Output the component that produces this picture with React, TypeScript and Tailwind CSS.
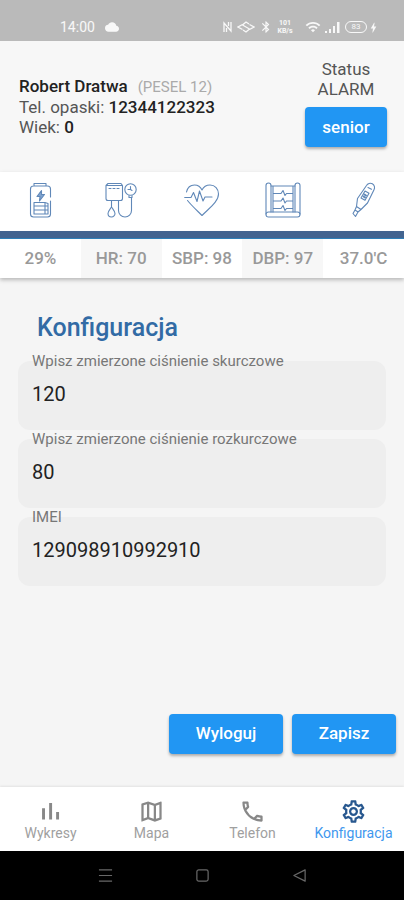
import React, { useState } from "react";
import {
  MdBluetooth,
  MdBolt,
  MdCloud,
  MdOutlineMap,
  MdOutlinePhone,
  MdOutlineSettings,
  MdWifi,
} from "react-icons/md";

const line = {
  width: 36,
  height: 36,
  viewBox: "0 0 36 36",
  fill: "none",
  stroke: "currentColor",
  strokeWidth: 1.1,
  strokeLinecap: "round" as const,
  strokeLinejoin: "round" as const,
  "aria-hidden": true,
};

function BatteryIcon() {
  return (
    <svg {...line}>
      <path d="M12 4V1.500h12V4M28.500 15V7a3 3 0 0 0-3-3h-14a3 3 0 0 0-3 3v25a3 3 0 0 0 3 3h14a3 3 0 0 0 3-3V19" />
      <path d="M19.500 8.500L15 14.500h3l-.5 4.500 5-6.500h-3z" fill="#7fa3cf" />
      <path d="M12 20.500h11v11.500H12zM12 24h14M12 28h14M23 20.500l3 1V32h-3" />
    </svg>
  );
}

function PressureIcon() {
  return (
    <svg {...line}>
      <path d="M3 3.500h16.500v13a2 2 0 0 1-2 2H5a2 2 0 0 1-2-2zM3 3.500l2-2h13l1.500 2M6 6.500h2M10 6.500h2M14 6.500h2" />
      <path d="M8.500 18.500V25M8.500 25c-2 3-3.500 4.500-3.500 6.500a3.500 3.500 0 0 0 7 0c0-2-1.500-3.500-3.500-6.500z" />
      <circle cx="27.500" cy="7.500" r="5.700" />
      <path d="M27.500 4.500v3H25M27.500 7.500l1.500 1M26 13.500v2h3v-2M28.500 15.500v13a6.500 6.500 0 0 1-13 0v-10" />
    </svg>
  );
}

function HeartIcon() {
  return (
    <svg {...line}>
      <path d="M2.500 10C3.500 5.500 6.500 3 10.500 3c3.500 0 6 1.800 7.500 5 1.500-3.200 4.500-5 8-5 5 0 8.500 4 8.500 9 0 7.500-8.500 13.500-16.500 21.500C13 28.500 7.500 23.500 3.500 18.500" />
      <path d="M.7 15.500H7l2.500-5 3.500 9L15.500 9l3.500 10 2-4h7" />
    </svg>
  );
}

function ScrollIcon() {
  return (
    <svg {...line}>
      <path d="M1 32V3.500a2.500 2.500 0 0 1 5 0V30M35 32V3.500a2.500 2.500 0 0 0-5 0V30" />
      <path d="M1 32.500A2.500 2.500 0 0 1 3.500 30h29a2.500 2.500 0 0 1 0 5h-29A2.500 2.500 0 0 1 1 32.500z" />
      <path d="M6 4h24M8 4v26M28 4v26M8 11.500h8l2-3 2 5 1.500-2H28M8 19h8l2-3 2 5 1.500-2H28M8 26.500h8l2-3 2 5 1.500-2H28" />
    </svg>
  );
}

function ThermometerIcon() {
  return (
    <svg {...line}>
      <path d="M20.500 3.500a4.200 4.200 0 0 1 7.500 4.200L21.500 21 15 27.500l-4.500-3 1-8zM10.500 24.500L9 28l3 2 3-2.500M9 28l-2 3.500 2.500 3 2.500-4.500M22 5.500l3.500 1.700" />
      <path d="M19 9l4 2.300-4 7-4-2.300z" />
      <path d="M18.500 12.500l1.500 1M17.500 14.500l1.500 1" strokeWidth="2" />
    </svg>
  );
}

const metrics = [
  { Icon: BatteryIcon, value: "29%" },
  { Icon: PressureIcon, value: "HR: 70" },
  { Icon: HeartIcon, value: "SBP: 98" },
  { Icon: ScrollIcon, value: "DBP: 97" },
  { Icon: ThermometerIcon, value: "37.0'C" },
];

function ChartIcon({ size = 27, className }: { size?: number; className?: string }) {
  return (
    <svg width={size} height={size} viewBox="0 0 24 24" fill="currentColor" className={className} aria-hidden="true">
      <path d="M4.500 9h2.600v10H4.500zM10.800 4.500h2.600V19h-2.600zM17 12.500h2.600V19H17z" />
    </svg>
  );
}

const tabs = [
  { Icon: ChartIcon, label: "Wykresy" },
  { Icon: MdOutlineMap, label: "Mapa" },
  { Icon: MdOutlinePhone, label: "Telefon" },
  { Icon: MdOutlineSettings, label: "Konfiguracja" },
];

function StatusBar() {
  return (
    <div className="flex h-[41px] items-end justify-between bg-[#bababa] pr-6 pb-1 pl-[60px] text-white/90">
      <div className="flex items-center gap-2.5 text-sm leading-5">
        14:00
        <MdCloud size={14} />
      </div>
      <div className="flex h-5 items-center gap-1">
        <svg width="11" height="12" viewBox="0 0 11 12" fill="none" stroke="currentColor" strokeWidth="1.300" aria-hidden="true">
          <path d="M2 11V2l7 8V1M4.500 11V7M6.500 1v4" />
        </svg>
        <svg width="18" height="12" viewBox="0 0 18 12" fill="none" stroke="currentColor" strokeWidth="1.300" aria-hidden="true">
          <path d="M5.500 3.500L1 6l4.500 2.500M12.500 3.500L17 6l-4.500 2.500M12 3L9 1 5.500 4l7 4L9 11 6 9" />
        </svg>
        <MdBluetooth size={14} />
        <div className="flex w-4 flex-col items-center text-[7px] leading-[8px] font-bold">
          <span>101</span>
          <span>KB/s</span>
        </div>
        <span className="w-1" />
        <MdWifi size={16} />
        <svg width="16" height="12" viewBox="0 0 16 12" fill="currentColor" aria-hidden="true">
          <path d="M0 10h2v2H0zM4 8h2v4H4zM8 5h2v7H8zM12 1h2.500v11H12z" />
        </svg>
        <div className="flex items-center">
          <span className="flex h-3 w-[22px] items-center justify-center rounded-md border border-current text-[8px] leading-[8px]">
            83
          </span>
          <MdBolt size={13} />
        </div>
      </div>
    </div>
  );
}

function Field({ id, label, initial }: { id: string; label: string; initial: string }) {
  const [value, setValue] = useState(initial);
  return (
    <div className="flex flex-col">
      <label htmlFor={id} className="z-10 -mb-2 px-3.5 text-[15px] leading-4 text-[#777]">
        {label}
      </label>
      <input
        id={id}
        value={value}
        onChange={(e) => setValue(e.target.value)}
        className="h-[69px] w-full rounded-xl bg-[#eeeeee] px-3.5 pb-1 text-xl text-[#222] outline-none"
      />
    </div>
  );
}

const primary =
  "h-10 rounded bg-[#2196f3] text-[17px] font-medium text-white shadow-[0_2px_3px_rgba(0,0,0,0.3)]";

const systemButtons = [
  { label: "Ostatnie", d: "M1 2h14M1 8h14M1 14h14" },
  { label: "Ekran główny", d: "M4 2h8a2 2 0 0 1 2 2v8a2 2 0 0 1-2 2H4a2 2 0 0 1-2-2V4a2 2 0 0 1 2-2z" },
  { label: "Wstecz", d: "M14 2v12L2 8z" },
];

export default function App() {
  return (
    <div className="flex min-h-screen flex-col bg-[#f5f5f5] font-['Roboto',sans-serif]">
      <StatusBar />
      <header className="flex h-[131px] items-start justify-between bg-[#f7f7f7] pt-[18px] pr-[17px] pl-[19px] text-[17px] leading-5 text-[#555]">
        <div className="pt-[17px]">
          <div className="flex items-baseline gap-2.5">
            <span className="font-medium text-[#222]">Robert Dratwa</span>
            <span className="text-[15px] text-[#aaa]">(PESEL 12)</span>
          </div>
          <p>
            Tel. opaski: <span className="font-medium text-[#222]">12344122323</span>
          </p>
          <p>
            Wiek: <span className="font-medium text-[#222]">0</span>
          </p>
        </div>
        <div className="flex flex-col items-center">
          <span>Status</span>
          <span>ALARM</span>
          <button type="button" className={`${primary} mt-2 w-[82px]`}>
            senior
          </button>
        </div>
      </header>

      <section className="bg-white shadow-[0_2px_4px_rgba(0,0,0,0.25)]">
        <div className="grid h-[59px] grid-cols-5 items-center justify-items-center pb-1 text-[#6088b8]">
          {metrics.map(({ Icon, value }) => (
            <Icon key={value} />
          ))}
        </div>
        <div className="h-2 border-b border-[#2e7fb8] bg-[#436490]" />
        <div className="grid h-[39px] grid-cols-5 text-[17px] font-medium text-[#999]">
          {metrics.map(({ value }) => (
            <div key={value} className="flex items-center justify-center even:bg-[#f7f7f7]">
              {value}
            </div>
          ))}
        </div>
      </section>

      <main className="flex flex-1 flex-col">
        <form className="flex flex-1 flex-col" onSubmit={(e) => e.preventDefault()}>
          <h1 className="px-[37px] pt-[35px] text-[25px] leading-[30px] font-medium text-[#326ba5]">Konfiguracja</h1>
          <div className="flex flex-col gap-px px-[18px] pt-2.5">
            <Field id="systolic" label="Wpisz zmierzone ciśnienie skurczowe" initial="120" />
            <Field id="diastolic" label="Wpisz zmierzone ciśnienie rozkurczowe" initial="80" />
            <Field id="imei" label="IMEI" initial="129098910992910" />
          </div>
          <div className="mt-auto flex justify-end gap-[9px] pr-2 pb-[33px]">
            <button type="button" className={`${primary} w-[114px]`}>
              Wyloguj
            </button>
            <button type="submit" className={`${primary} w-[104px]`}>
              Zapisz
            </button>
          </div>
        </form>
      </main>

      <nav className="grid h-16 grid-cols-4 bg-white shadow-[0_-1px_2px_rgba(0,0,0,0.08)]">
        {tabs.map(({ Icon, label }) => (
          <button
            key={label}
            type="button"
            className="group flex flex-col items-center pt-[11px] text-sm leading-4 text-[#a0a0a0] last:text-[#3f98ee]"
          >
            <Icon size={27} className="text-[#888] group-last:text-[#28588f]" />
            {label}
          </button>
        ))}
      </nav>
      <div className="flex h-[49px] items-center justify-center gap-[82px] bg-black text-[#686868]">
        {systemButtons.map(({ label, d }) => (
          <button key={label} type="button" aria-label={label}>
            <svg width="15" height="15" viewBox="0 0 16 16" fill="none" stroke="currentColor" strokeWidth="1.300" strokeLinejoin="round" aria-hidden="true">
              <path d={d} />
            </svg>
          </button>
        ))}
      </div>
    </div>
  );
}
